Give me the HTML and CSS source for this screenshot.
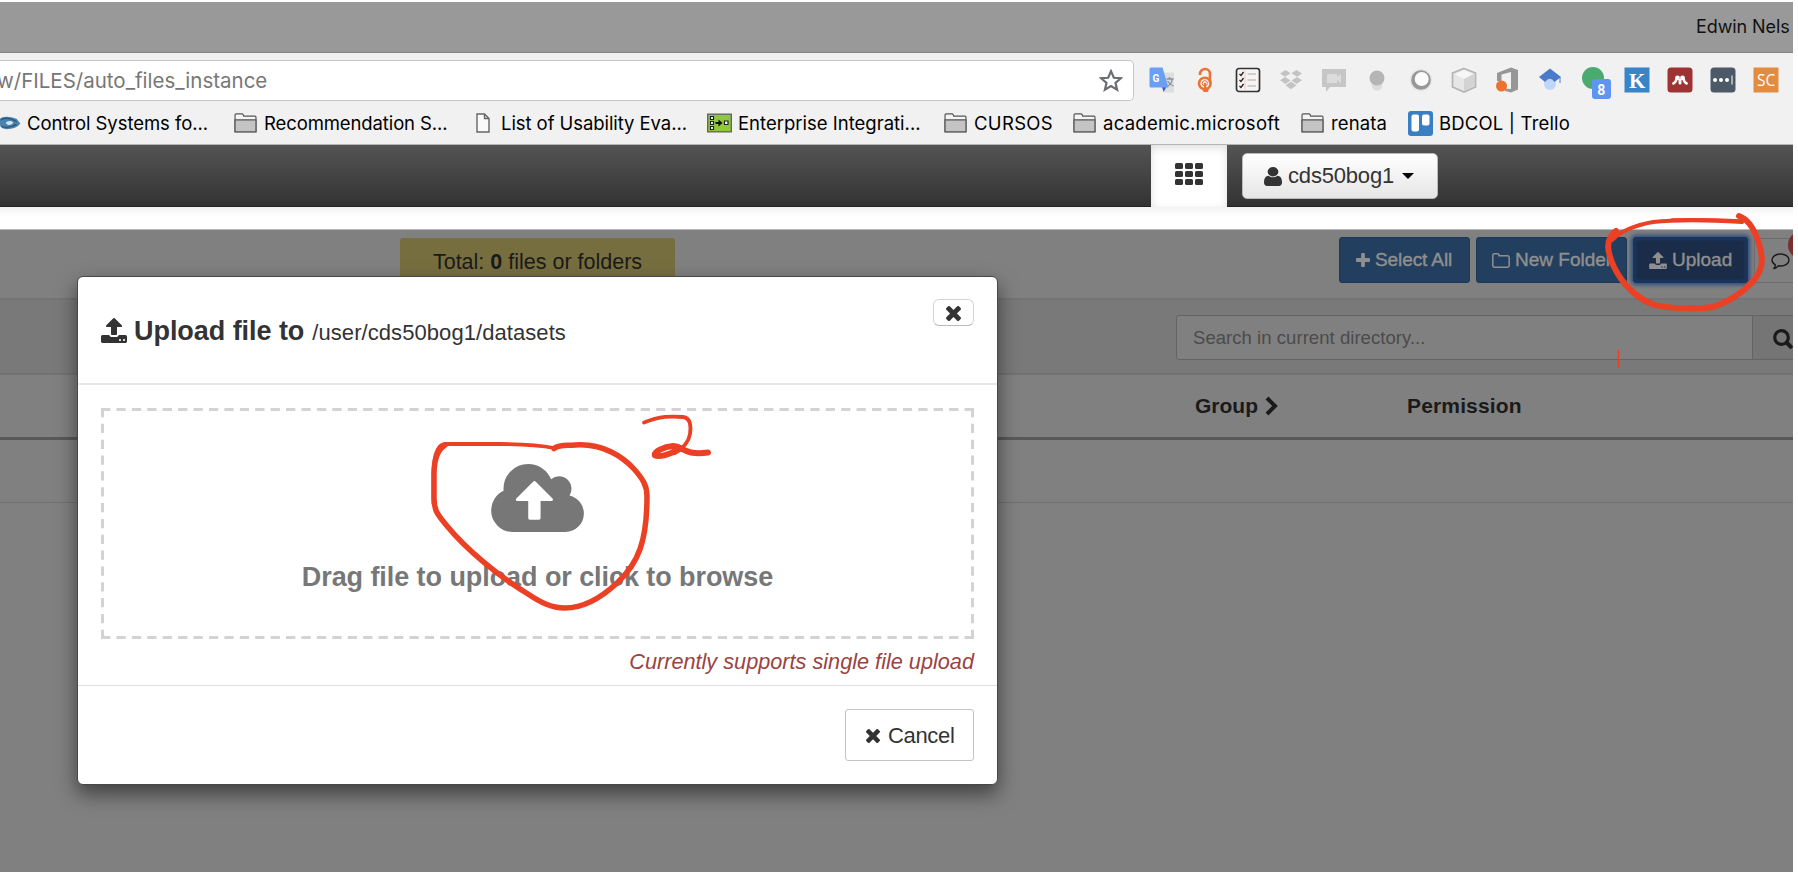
FILE: index.html
```html
<!DOCTYPE html>
<html lang="en">
<head>
<meta charset="utf-8">
<title>Files - Upload</title>
<link rel="stylesheet" href="styles.css">
</head>
<body>
<svg class="defs" width="0" height="0">
  <defs>
    <symbol id="upload" viewBox="64 64 1664 1600"><path d="M1344 1472q0-26-19-45t-45-19-45 19-19 45 19 45 45 19 45-19 19-45zm256 0q0-26-19-45t-45-19-45 19-19 45 19 45 45 19 45-19 19-45zm128-224v320q0 40-28 68t-68 28h-1472q-40 0-68-28t-28-68v-320q0-40 28-68t68-28h427q21 56 70.500 92t110.500 36h256q61 0 110.500-36t70.500-92h427q40 0 68 28t28 68zm-325-648q-17 40-59 40h-256v448q0 26-19 45t-45 19h-256q-26 0-45-19t-19-45v-448h-256q-42 0-59-40-17-39 14-69l448-448q18-19 45-19t45 19l448 448q31 30 14 69z"/></symbol>
    <symbol id="times" viewBox="302 434 1188 1188"><path transform="translate(0 68)" d="M1490 1322q0 40-28 68l-136 136q-28 28-68 28t-68-28l-294-294-294 294q-28 28-68 28t-68-28l-136-136q-28-28-28-68t28-68l294-294-294-294q-28-28-28-68t28-68l136-136q28-28 68-28t68 28l294 294 294-294q28-28 68-28t68 28l136 136q28 28 28 68t-28 68l-294 294 294 294q28 28 28 68z"/></symbol>
    <symbol id="folder" viewBox="0 0 25 22">
      <path d="M1 20.500V2.500Q1 1 2.500 1H8.500Q9.500 1 10 2L10.500 3.500H23Q24 3.500 24 4.500V20.500Z" fill="#f4f4f4" stroke="#555" stroke-width="1.300"/>
      <path d="M1 7.500H24V20.800H1Z" fill="#c4c4c4" stroke="#555" stroke-width="1.300"/>
    </symbol>
  </defs>
</svg>
<div class="window">
  <header class="titlebar"><span class="profile">Edwin Nels</span></header>
  <div class="toolbar">
    <div class="omnibox">
      <span class="url">w/FILES/auto_files_instance</span>
      <svg class="star" viewBox="0 0 22 22"><path d="M11 2l2.600 6 6.400.500-4.900 4.200 1.500 6.300L11 15.600 5.400 19l1.500-6.300L2 8.500 8.400 8z" fill="none" stroke="#6a6d72" stroke-width="2"/></svg>
    </div>
    <div class="extensions">
      <svg viewBox="0 0 26 26"><path d="M10 5.500H25V25.500H15Z" fill="#dedede"/><path d="M13 20H17.500L14.500 25Z" fill="#3f5fc4"/><path d="M2 .500H13.500L19.500 20.500H2Q.500 20.500.500 19V2Q.500.500 2 .500Z" fill="#6b9ff3"/><text x="3.500" y="15" class="g-letter">G</text><path d="M17.500 12H24.500M20.500 10V12M19 19Q23 16.500 23 12M18.500 14Q20.500 17.500 24.500 19" stroke="#7d9597" stroke-width="1.300" fill="none"/></svg>
      <svg viewBox="0 0 26 26"><g fill="none" stroke="#ea7434" stroke-width="2.600"><path d="M8 8V7A5 5 0 0 1 18 7V16"/><circle cx="12.800" cy="16.500" r="5.800"/></g><circle cx="12.800" cy="16.300" r="2.600" fill="none" stroke="#ea7434"/><path d="M12 16h2v4l3 1.500-1 3.500h-4.500l-2-4.500 2.500.500z" fill="#ea7434"/></svg>
      <svg viewBox="0 0 26 26"><rect x="1.500" y="1.500" width="23" height="23" rx="2.500" fill="#f7f4f4" stroke="#333" stroke-width="1.700"/><path d="M10 2V24" stroke="#ecc7cc"/><path d="M12.500 7H21M12.500 13H21M12.500 19H21" stroke="#aaa" stroke-width="1.200"/><path d="M4.500 7l1.500 1.500L8.500 5M4.500 13l1.500 1.500L8.500 11M4.500 19l1.500 1.500L8.500 17" fill="none" stroke="#222" stroke-width="1.300"/></svg>
      <svg viewBox="0 0 26 26" fill="#c3c3c3"><path d="M7.500 3l5 3.300L7 9.800 2 6.500zM18.500 3l-5 3.300L19 9.800l5-3.300zM2 13.300l5-3.300 5.500 3.600-5 3.300zM24 13.300l-5-3.300-5.500 3.600 5 3.300zM7.500 18.300l5-3.400h1l5 3.400-5.500 4z"/></svg>
      <svg viewBox="0 0 26 26"><path d="M1 2H25V20H9L5 25V20H1Z" fill="#c6c6c6"/><path d="M6 7H16V10L20 7V16L16 13V16H6Z" fill="#dcdcdc"/></svg>
      <svg viewBox="0 0 26 26"><circle cx="13" cy="18" r="5.500" fill="#ddd"/><circle cx="13" cy="11" r="7.500" fill="#b5b5b5"/></svg>
      <svg viewBox="0 0 26 26"><circle cx="13" cy="13" r="11.200" fill="#e6e6e6"/><circle cx="13" cy="13" r="9.800" fill="#979797"/><circle cx="13.700" cy="12" r="7" fill="#fafafa"/></svg>
      <svg viewBox="0 0 26 26"><path d="M13 1.500L24.500 6V20L13 25 1.500 20V6Z" fill="#e6e6e6" stroke="#b4b4b4" stroke-width="1.700"/><path d="M13 3L22 7 13 12 4 7Z" fill="#f6f6f6"/><path d="M13 12V24L23 19V7Z" fill="#d3d3d3"/></svg>
      <svg viewBox="0 0 26 26"><path d="M3 6L17 .500 24 3V22.500L17 25.500 11 24V21.500L17 22V5L7.500 7.500V14H3Z" fill="#979797"/><circle cx="7.500" cy="19" r="5.500" fill="#ee722e"/></svg>
      <svg viewBox="0 0 26 26"><circle cx="13" cy="17" r="6" fill="#bfd6fb"/><path d="M13 1.500L24 10 17.500 15Q13 8.500 8 15L2 10Z" fill="#4a7bc8"/><path d="M23 10V16" stroke="#4a7bc8"/></svg>
      <svg class="wide" viewBox="0 0 30 32"><circle cx="12" cy="11" r="11" fill="#4aaa70"/><rect x="11" y="12" width="19" height="20" rx="3" fill="#5e95f2"/><text x="16.300" y="27.500" class="eight">8</text></svg>
      <svg viewBox="0 0 26 26"><path d="M.500.500H25.500V25.500H.500Z" fill="#3785c7"/><text x="5" y="20.500" class="k-letter">K</text></svg>
      <svg viewBox="0 0 26 26"><rect x=".500" y=".500" width="25" height="25" rx="3.500" fill="#9d3433"/><path d="M6.300 16.500Q9 15.500 9.300 12M19.700 16.500Q17 15.500 16.700 12" fill="none" stroke="#fff" stroke-width="2.400" stroke-linecap="round"/><path d="M13 16V13" stroke="#fff" stroke-width="3" stroke-linecap="round"/><circle cx="10.500" cy="10.800" r="2.400" fill="#fff"/><circle cx="15.500" cy="10.800" r="2.400" fill="#fff"/></svg>
      <svg viewBox="0 0 26 26"><rect x=".500" y=".500" width="25" height="25" rx="3.500" fill="#4b5a66"/><g fill="#fff"><circle cx="5" cy="13" r="2"/><circle cx="11" cy="13" r="2"/><circle cx="17" cy="13" r="2"/><path d="M21.500 8.500h1v9h-1z"/></g></svg>
      <svg viewBox="0 0 26 26"><path d="M.500.500H25.500V25.500H.500Z" fill="#e38b3f"/><text x="4" y="19" class="sc">SC</text></svg>
    </div>
  </div>
  <nav class="bookmarks">
    <a class="bm b1"><svg viewBox="0 0 21 16"><path d="M0 2Q7-1 17 3L21 8Q17 14 6 14Q-4 13 0 2Z" fill="#4b83ad"/><path d="M6 6.500Q10 4 13 6.500Q14 9.500 8 9.500Q5 8.500 6 6.500Z" fill="#d5e5f0"/><path d="M0 4Q8 0 17 6M1 11Q8 14 17 9" stroke="#245a86" fill="none" stroke-width="1.500"/></svg><span>Control Systems fo...</span></a>
    <a class="bm b2"><svg><use href="#folder"/></svg><span>Recommendation S...</span></a>
    <a class="bm b3"><svg viewBox="0 0 14 20"><path d="M1 1H8.500L13 5.500V19H1ZM8.500 1V5.500H13" fill="#fafafa" stroke="#666" stroke-width="1.400"/></svg><span>List of Usability Eva...</span></a>
    <a class="bm b4"><svg viewBox="0 0 25 19"><rect x=".700" y=".700" width="23.600" height="17.600" fill="#8fc83d" stroke="#666" stroke-width="1.400"/><g fill="#fff" stroke="#222" stroke-width="1.200"><path d="M3.500 3h3v3h-3zM3.500 8h3v3h-3zM3.500 13h3v3h-3zM17.500 7.500h3.500v3.500h-3.500z"/></g><path d="M8.500 8.500h3V6L15.500 9.500 11.500 13v-2.500h-3z" fill="#111"/></svg><span>Enterprise Integrati...</span></a>
    <a class="bm b5"><svg><use href="#folder"/></svg><span>CURSOS</span></a>
    <a class="bm b6"><svg><use href="#folder"/></svg><span>academic.microsoft</span></a>
    <a class="bm b7"><svg><use href="#folder"/></svg><span>renata</span></a>
    <a class="bm b8"><svg viewBox="0 0 25 25"><rect width="25" height="25" rx="3" fill="#3a7fc4"/><rect x="3.500" y="3.500" width="7.500" height="17" rx="2" fill="#fff"/><rect x="14" y="3.500" width="7.500" height="11" rx="2" fill="#fff"/></svg><span>BDCOL | Trello</span></a>
  </nav>
  <div class="navbar">
    <div class="apps"><svg viewBox="0 0 28 22" fill="#333"><rect width="8" height="6" rx="1.500"/><rect x="10" width="8" height="6" rx="1.500"/><rect x="20" width="8" height="6" rx="1.500"/><rect y="8" width="8" height="6" rx="1.500"/><rect x="10" y="8" width="8" height="6" rx="1.500"/><rect x="20" y="8" width="8" height="6" rx="1.500"/><rect y="16" width="8" height="6" rx="1.500"/><rect x="10" y="16" width="8" height="6" rx="1.500"/><rect x="20" y="16" width="8" height="6" rx="1.500"/></svg></div>
    <div class="user">
      <svg class="person" viewBox="256 128 1280 1536" preserveAspectRatio="none"><path d="M1536 1399q0 109-62.500 187t-150.500 78h-854q-88 0-150.500-78t-62.500-187q0-85 8.500-160.500t31.500-152 58.500-131 94-89 134.500-34.500q131 128 313 128t313-128q76 0 134.500 34.500t94 89 58.500 131 31.500 152 8.500 160.500zm-256-887q0 159-112.500 271.500t-271.500 112.500-271.500-112.500-112.500-271.500 112.500-271.500 271.500-112.500 271.500 112.500 112.500 271.500z"/></svg>
      <span>cds50bog1</span><i class="caret"></i>
    </div>
  </div>
  <div class="strip"></div>
  <main class="files">
    <section class="actions">
      <div class="total">Total: <b>0</b> files or folders</div>
      <div class="buttons">
        <button class="btn all"><svg class="plus" viewBox="192 128 1408 1408"><path d="M1600 736v192q0 40-28 68t-68 28h-416v416q0 40-28 68t-68 28h-192q-40 0-68-28t-28-68v-416h-416q-40 0-68-28t-28-68v-192q0-40 28-68t68-28h416v-416q0-40 28-68t68-28h192q40 0 68 28t28 68v416h416q40 0 68 28t28 68z"/></svg><span>Select All</span></button>
        <button class="btn new"><svg class="fold" viewBox="0 0 18 15"><path d="M.800 12.500V2.500Q.800.800 2.500.800H5.500Q7 .800 7 2.800H15.500Q17.200 2.800 17.200 4.500V12.500Q17.200 14.200 15.500 14.200H2.500Q.800 14.200.800 12.500Z" fill="none" stroke="#8f8f8f" stroke-width="1.500"/></svg><span>New Folder</span></button>
        <button class="btn up"><svg class="upl"><use href="#upload"/></svg><span>Upload</span></button>
        <div class="feedback"><svg viewBox="0 0 19 17"><path d="M9.500 1C14 1 18 3.400 18 7S14 13 9.500 13Q8.500 13 7.500 12.800Q5.500 15 2.500 15.700Q4.500 14 4.300 11.800Q1 10 1 7C1 3.400 5 1 9.500 1Z" fill="none" stroke="#1a1a1a" stroke-width="1.400"/></svg><i class="dot"></i></div>
      </div>
    </section>
    <section class="search">
      <div class="field">Search in current directory...</div>
      <div class="go"><svg viewBox="0 0 21 20"><circle cx="8.500" cy="8.500" r="6.800" fill="none" stroke="#1a1a1a" stroke-width="3.200"/><path d="M13.500 13.500L19 19" stroke="#1a1a1a" stroke-width="4"/></svg></div>
    </section>
    <section class="thead">
      <div class="group"><span>Group</span><svg viewBox="0 0 13 20"><path d="M2 2L10 10 2 18" fill="none" stroke="#1a1a1a" stroke-width="4"/></svg></div>
      <div class="perm">Permission</div>
    </section>
    <section class="row"></section>
  </main>
  <div class="modal">
    <div class="m-head">
      <svg><use href="#upload"/></svg>
      <h2>Upload file to</h2><span class="path">/user/cds50bog1/datasets</span>
      <button class="close"><svg><use href="#times"/></svg></button>
    </div>
    <div class="m-body">
      <div class="drop">
        <svg class="dash" viewBox="0 0 873 231"><g stroke="#d3d3d3" stroke-width="3" stroke-dasharray="9.280 6.140" fill="none"><path d="M0 1.500H873M0 229.500H873"/><path d="M1.500 0V231M871.500 0V231" stroke-dasharray="9.250 6.590"/></g></svg>
        <svg class="cloud" viewBox="0 128 1920 1408"><path d="M1280 864q0-14-9-23l-352-352q-9-9-23-9t-23 9l-351 351q-10 12-10 24 0 14 9 23t23 9h224v352q0 13 9.500 22.500t22.500 9.500h192q13 0 22.500-9.500t9.500-22.500v-352h224q13 0 22.500-9.500t9.500-22.500zm640 288q0 159-112.500 271.500t-271.500 112.500h-1088q-185 0-316.500-131.500t-131.500-316.500q0-130 70-240t188-165q-2-30-2-43 0-212 150-362t362-150q156 0 285.500 87t188.500 231q71-62 166-62 106 0 181 75t75 181q0 76-41 138 130 31 213.500 135.500t83.500 238.500z"/></svg>
        <span class="drag">Drag file to upload or click to browse</span>
      </div>
      <span class="note">Currently supports single file upload</span>
    </div>
    <div class="m-foot"><button class="cancel"><svg><use href="#times"/></svg><span>Cancel</span></button></div>
  </div>
  <svg class="ink" viewBox="0 0 1798 874">
    <path d="M1742 221Q1700 219 1672 220" stroke-width="3.500"/>
    <path d="M1742 222C1712 220 1680 219 1653 222C1636 225 1621 231 1612 240" stroke-width="4"/>
    <path d="M1739 216C1756 222 1764 255 1761 267C1757 283 1734 300 1713 307C1700 309 1668 309 1655 305C1636 299 1622 283 1614 267C1608 254 1604 240 1616 231" stroke-width="6"/>
    <path d="M1618.500 350V367" stroke-width="1.500"/>
    <path d="M433.500 503V472C434 454 438 444 446 444H500Q535 444 554 448" stroke-width="3.800"/>
    <path d="M554 448.500C560 444 568 446 575 445C603 443 623 457 634 469C643 479 647 486 647 496C647 540 639 563 617 583C602 597 583 608 565 608C551 608 540 602 528 594C498 576 466 549 447 526C437 514 434 510 434 498V475C434 458 438 449 445 445" stroke-width="5.500"/>
    <path d="M644 422.500C660 416 671 416 683 417C691 418 691 427 690 434C689 441 683 449 675 453" stroke-width="3.800"/>
    <path d="M679 449C670 455 659 457 655 455.500C653 452 664 446.500 673 446C683 446 684 456 708 452.500" stroke-width="6"/>
  </svg>
</div>
</body>
</html>
```
FILE: styles.css
```css
* { box-sizing: border-box; }
body { margin: 0; background: #fff; font-family: "Liberation Sans", Arial, sans-serif; color: #333; }
svg { display: block; flex: none; }
button { margin: 0; font: inherit; }
.defs { position: absolute; }
.window { position: relative; width: 1793px; height: 872px; padding-top: 2px; overflow: hidden; white-space: nowrap; }

.titlebar { height: 51px; background: #999; border-bottom: 1px solid #858585; padding-left: 1696px; display: flex; font: 18px/49px Inter, sans-serif; letter-spacing: -.1px; color: #111; }
.toolbar { height: 49px; background: #f1f1f1; padding-top: 7px; display: flex; }
.omnibox { width: 1134px; height: 41px; background: #fff; border: 1px solid #c6c6c6; border-left: 0; border-radius: 0 5px 5px 0; display: flex; justify-content: space-between; align-items: center; padding-right: 10px; }
.url { font: 20.500px/40px Inter, sans-serif; color: #777; margin-left: -3px; padding-top: 1px; }
.star { width: 24px; height: 24px; }
.extensions { display: flex; gap: 17.100px; padding: 7px 0 0 15px; }
.extensions svg { width: 26px; height: 26px; }
.extensions .wide { width: 30px; height: 32px; margin: 0 -4px 0 1px; }
.g-letter { font: bold 10px Roboto, sans-serif; fill: #fff; }
.eight { font: bold 14px Roboto, sans-serif; fill: #fff; }
.k-letter { font: bold 21px "Liberation Serif", serif; fill: #fff; }
.sc { font: 15.500px "Open Sans", sans-serif; fill: #fff; }

.bookmarks { height: 43px; background: #f1f1f1; border-bottom: 1px solid #b4b4b4; display: flex; color: #000; font: 18.500px/43px Inter, sans-serif; }
.bm { display: flex; align-items: center; height: 42px; }
.bm svg { width: 25px; height: 20px; }
.b1 { width: 233px; gap: 6px; letter-spacing: -.06px; } .b1 svg { width: 21px; height: 15px; }
.b2 { width: 243px; gap: 6px; letter-spacing: -.11px; }
.b3 { width: 231px; gap: 11px; letter-spacing: -.07px; } .b3 svg { width: 14px; }
.b4 { width: 236px; gap: 6px; }
.b5 { width: 129px; gap: 6px; letter-spacing: .32px; }
.b6 { width: 228px; gap: 6px; letter-spacing: .26px; }
.b7 { width: 108px; gap: 6px; letter-spacing: .12px; }
.b8 { gap: 6px; letter-spacing: .18px; } .b8 svg { height: 25px; }

.navbar { height: 62px; background: linear-gradient(#545454, #333); border-bottom: 1px solid #222; display: flex; padding-left: 1151px; }
.apps { width: 76px; height: 62px; background: #fff; box-shadow: inset 0 3px 8px rgba(0,0,0,.13); padding: 18px 24px; }
.apps svg { width: 28px; height: 22px; }
.user { margin: 8px 0 0 15px; width: 196px; height: 46px; border: 1px solid #bbb; border-radius: 5px; background: linear-gradient(#fff, #e6e6e6); display: flex; align-items: center; padding-left: 21px; font-size: 22px; line-height: 44px; letter-spacing: -.18px; }
.person { width: 18px; height: 19px; margin-right: 6px; fill: #333; }
.caret { border: 6px solid transparent; border-top-color: #000; border-bottom: 0; margin-left: 8px; }
.strip { height: 23px; background: linear-gradient(#f2f2f2, #fff 9px); border-bottom: 1px solid #bbb; }

.files { height: 642px; background: #808080; color: #1a1a1a; }
.actions { height: 70px; border-bottom: 2px solid #747474; display: flex; padding: 7px 0 0 400px; }
.total { flex: none; width: 275px; height: 60px; margin-top: 1px; background: #776e40; border-radius: 3px; text-align: center; font-size: 21.500px; line-height: 48px; }
.buttons { display: flex; margin-left: 664px; gap: 6px; }
.btn { flex: none; height: 46px; border: 1px solid #1c3857; border-radius: 3px; background: #233f5f; color: #8f8f8f; font-size: 19px; line-height: 44px; padding: 0; display: flex; align-items: center; -webkit-text-stroke: .400px; }
.btn svg { fill: #8f8f8f; }
.all { width: 131px; padding-left: 16px; gap: 5px; letter-spacing: -.1px; } .plus { width: 14px; height: 14px; }
.new { width: 151px; padding-left: 15px; gap: 5px; } .fold { width: 18px; height: 15px; }
.up { width: 115px; padding-left: 15px; gap: 5px; background: #1a2c47; border-color: #173564; box-shadow: 0 0 4px 2px #2b4c7d, inset 0 0 3px 3px #1c355a; } .upl { width: 18px; height: 17px; }
.feedback { position: relative; flex: none; margin-top: 1px; width: 60px; height: 45px; border: 1px solid #6c6c6c; padding: 14px 0 0 16px; }
.feedback svg { width: 19px; height: 17px; }
.dot { position: absolute; left: 33px; top: -8px; width: 28px; height: 28px; border-radius: 50%; background: #7a2f2f; }
.search { height: 75px; background: #797979; border-bottom: 2px solid #727272; display: flex; padding: 15px 0 0 1176px; }
.field { flex: none; width: 577px; height: 45px; background: #808080; border: 1px solid #646464; border-radius: 3px 0 0 3px; padding-left: 16px; font-size: 18.500px; line-height: 43px; letter-spacing: .05px; color: #4b4b4b; }
.go { flex: none; width: 60px; height: 45px; border: 1px solid #646464; border-left: 0; padding: 13px 0 0 20px; background: #757575; }
.go svg { width: 21px; height: 20px; }
.thead { height: 65px; border-bottom: 3px solid #595959; display: flex; padding-left: 1195px; font-weight: bold; font-size: 21px; line-height: 62px; }
.group { width: 212px; display: flex; align-items: center; gap: 7px; }
.perm { letter-spacing: .15px; }
.group svg { width: 13px; height: 20px; }
.row { height: 63px; border-bottom: 1px solid #707070; }

.modal { position: absolute; left: 77px; top: 276px; width: 921px; height: 509px; background: #fff; border: 1px solid #484848; border-radius: 6px; box-shadow: 0 9px 20px rgba(0,0,0,.5); display: flex; flex-direction: column; }
.m-head { height: 108px; border-bottom: 2px solid #e7e7e7; padding: 0 23px; display: flex; align-items: center; }
.m-head > svg { width: 26px; height: 25px; margin-right: 7px; fill: #333; }
h2 { margin: 0 8px 0 0; padding-top: 2px; font-size: 27px; line-height: 104px; letter-spacing: -.05px; }
.path { font-size: 22px; letter-spacing: .07px; padding-top: 5px; }
.close { margin: -35px 0 0 auto; width: 41px; height: 27px; border: 1px solid #d5d5d5; border-bottom-color: #bbb; border-radius: 6px; background: #fff; padding: 1px 0 0 12px; }
.close svg { width: 15px; height: 15px; fill: #333; }
.m-body { height: 301px; border-bottom: 1px solid #ddd; padding: 23px 23px 0; display: flex; flex-direction: column; align-items: flex-end; }
.drop { position: relative; width: 873px; height: 231px; display: flex; flex-direction: column; align-items: center; padding-top: 56px; }
.dash { position: absolute; left: 0; top: 0; width: 873px; height: 231px; }
.cloud { width: 93px; height: 68px; fill: #777; }
.drag { font-weight: bold; font-size: 27px; line-height: 30px; margin-top: 30px; color: #777; letter-spacing: -.07px; }
.note { font-style: italic; font-size: 21.700px; line-height: 24px; margin-top: 11px; color: #9b4340; }
.m-foot { padding: 23px 23px 0; display: flex; justify-content: flex-end; }
.cancel { width: 129px; height: 52px; border: 1px solid #c4c4c4; border-radius: 3px; background: #fff; color: #333; font-size: 22px; line-height: 50px; letter-spacing: -.330px; display: flex; align-items: center; padding: 1px 0 0 20px; gap: 8px; }
.cancel svg { width: 14px; height: 14px; fill: #333; }
.ink { position: absolute; left: 0; top: 0; width: 1798px; height: 874px; fill: none; stroke: #ec4025; stroke-linecap: round; stroke-linejoin: round; }
```
